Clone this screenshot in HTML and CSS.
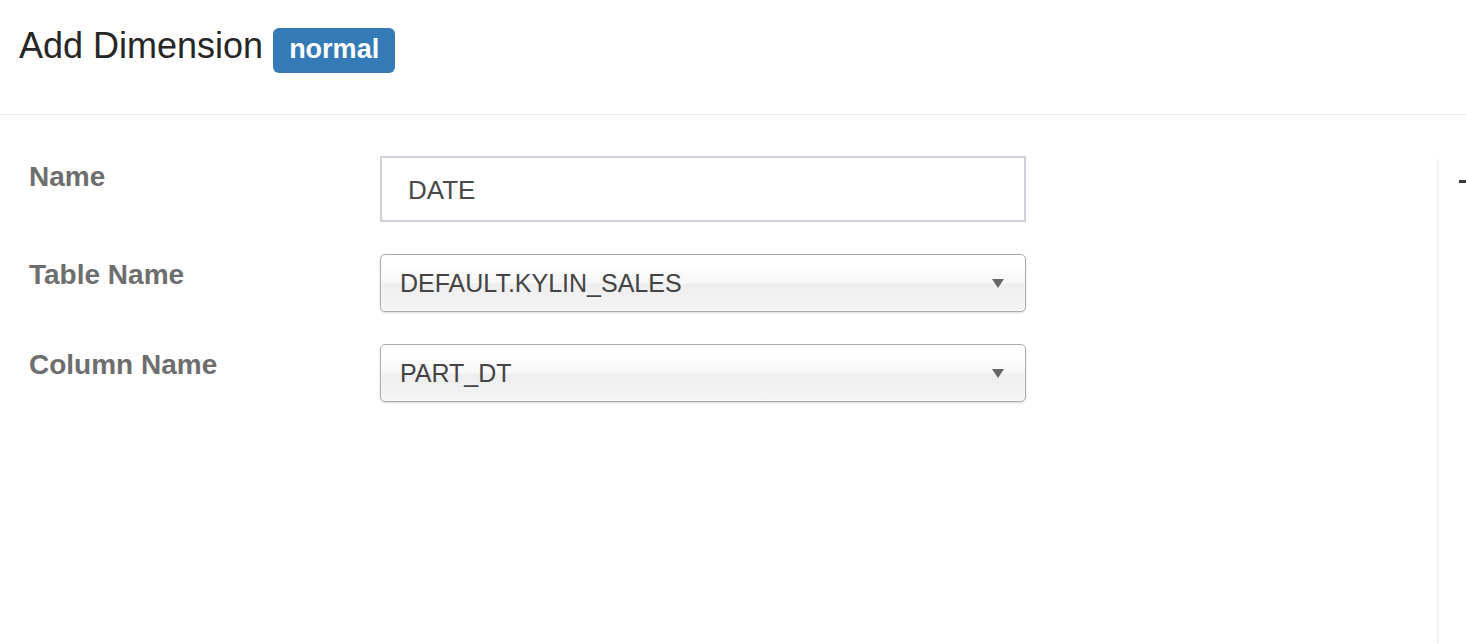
FILE: index.html
```html
<!DOCTYPE html>
<html lang="en">
<head>
<meta charset="utf-8">
<title>Add Dimension</title>
<link rel="stylesheet" href="styles.css">
</head>
<body>
<header class="modal-header">
  <h1 class="modal-title">Add Dimension</h1>
  <span class="badge">normal</span>
</header>
<main class="modal-body">
  <section class="form-area">
    <div class="form-grid">
      <label class="field-label" for="dim-name">Name</label>
      <input class="text-input" id="dim-name" type="text" value="DATE">

      <span class="field-label">Table Name</span>
      <div class="chosen-single">
        <span class="chosen-text">DEFAULT.KYLIN_SALES</span>
        <span class="chosen-arrow"></span>
      </div>

      <span class="field-label">Column Name</span>
      <div class="chosen-single">
        <span class="chosen-text">PART_DT</span>
        <span class="chosen-arrow"></span>
      </div>
    </div>
  </section>
  <aside class="side-panel">
    <div class="side-dash"></div>
  </aside>
</main>
</body>
</html>
```

FILE: styles.css
```css
html, body {
  margin: 0;
  padding: 0;
  background: #ffffff;
  font-family: "Liberation Sans", Arial, Helvetica, sans-serif;
  overflow: hidden;
}

.modal-header {
  height: 115px;
  box-sizing: border-box;
  border-bottom: 1px solid #ebebeb;
  padding: 26px 0 0 19px;
  display: flex;
  align-items: baseline;
}

.modal-title {
  margin: 0;
  font-size: 36px;
  font-weight: normal;
  line-height: 1.1;
  color: #262626;
}

.badge {
  display: inline-block;
  margin-left: 10px;
  padding: 8px 16px 10px;
  font-size: 27px;
  font-weight: bold;
  line-height: 1;
  color: #ffffff;
  background: #337ab7;
  border-radius: 6px;
}

.modal-body {
  display: flex;
  height: 528px;
}

.form-area {
  width: 1437px;
  flex: none;
  box-sizing: border-box;
  padding: 41px 0 0 29px;
}

.form-grid {
  display: grid;
  grid-template-columns: 351px 646px;
  row-gap: 32px;
}

.field-label {
  display: block;
  padding-top: 5px;
  font-size: 28px;
  line-height: 32px;
  font-weight: bold;
  color: #6e6e6e;
}

.text-input {
  box-sizing: border-box;
  width: 646px;
  height: 66px;
  margin: 0;
  padding: 2px 0 0 26px;
  border: 2px solid #cfd0dc;
  border-radius: 0;
  background: #ffffff;
  font-family: "Liberation Sans", Arial, Helvetica, sans-serif;
  font-size: 26px;
  color: #4a4a4a;
  outline: none;
}

.chosen-single {
  box-sizing: border-box;
  width: 646px;
  height: 58px;
  display: flex;
  align-items: center;
  justify-content: space-between;
  padding: 1px 21px 0 19px;
  border: 1px solid #aaaaaa;
  border-radius: 5px;
  background: linear-gradient(#ffffff 20%, #f6f6f6 50%, #eeeeee 52%, #f4f4f4 100%);
  box-shadow: inset 0 0 3px #ffffff, 0 1px 2px rgba(0, 0, 0, 0.15);
}

.chosen-text {
  font-size: 25px;
  color: #444444;
}

.chosen-arrow {
  width: 0;
  height: 0;
  border-left: 6px solid transparent;
  border-right: 6px solid transparent;
  border-top: 9px solid #666666;
}

.side-panel {
  flex: 1;
  margin-top: 44px;
  border-left: 2px solid #f1f1f1;
}

.side-dash {
  width: 7px;
  height: 3px;
  margin: 21px 0 0 20px;
  background: #3a3a3a;
}
```
